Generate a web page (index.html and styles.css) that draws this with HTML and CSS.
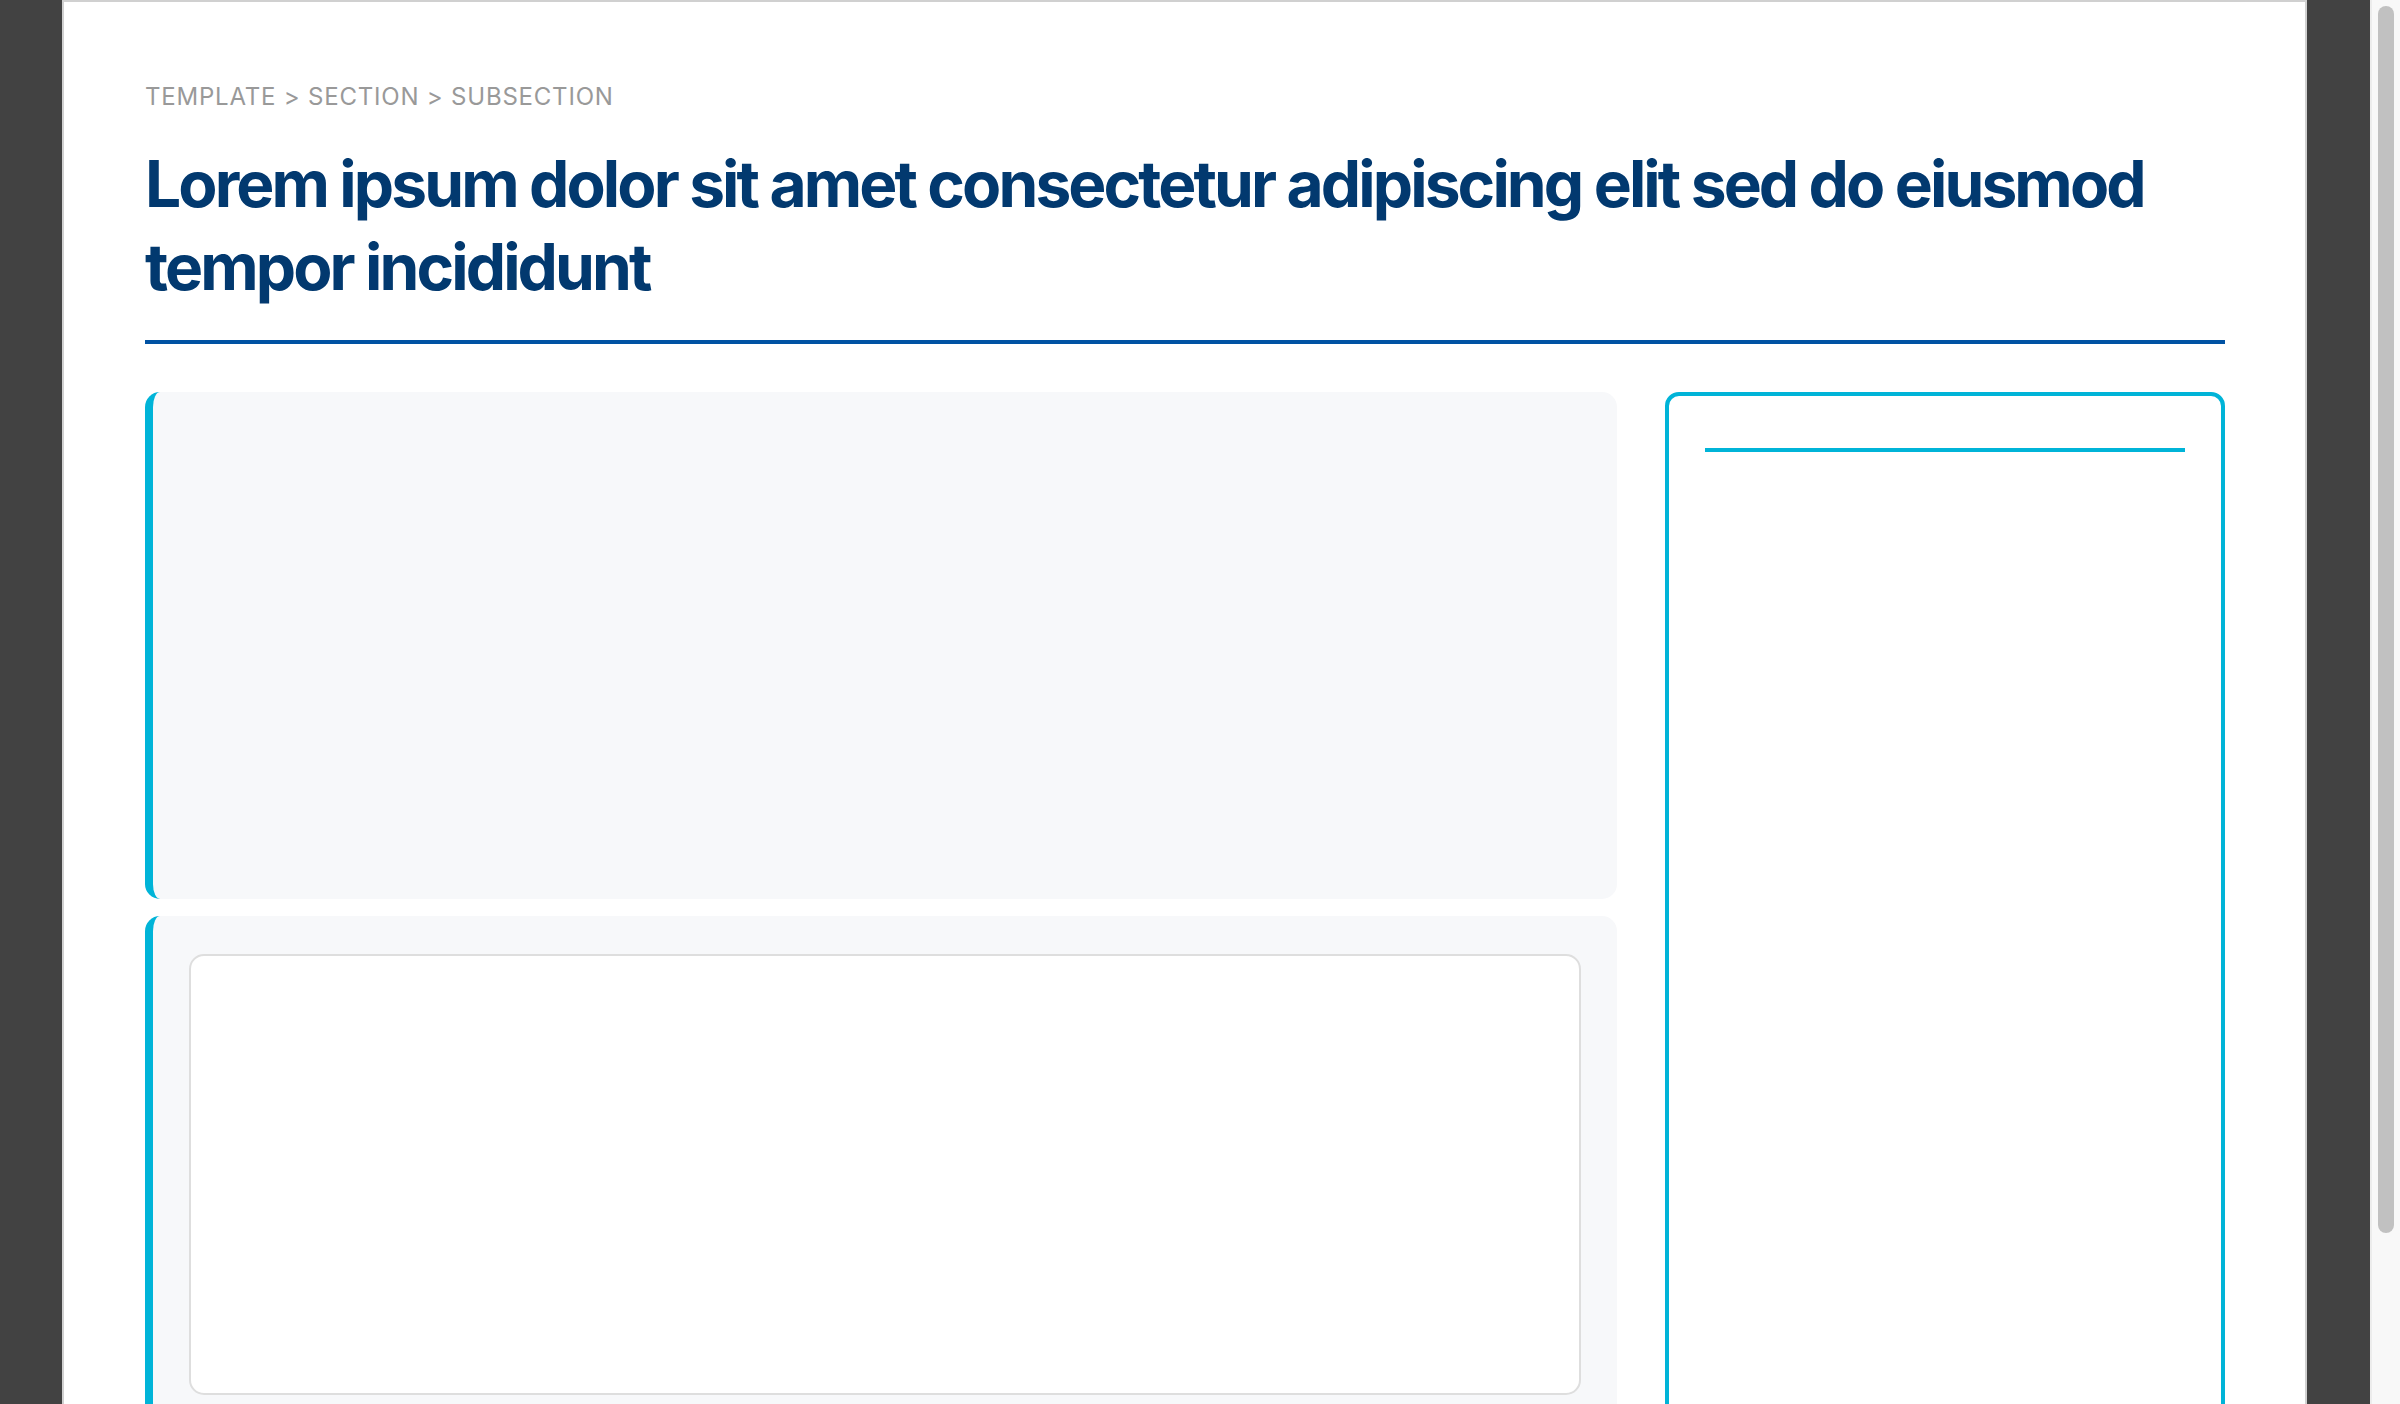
FILE: index.html
```html
<!DOCTYPE html>
<html lang="en">
<head>
<meta charset="utf-8">
<title>Template</title>
<link rel="stylesheet" href="styles.css">
</head>
<body>
<div class="gutter-left"></div>
<main class="page">
  <header class="page-header">
    <nav class="breadcrumb">TEMPLATE &gt; SECTION &gt; SUBSECTION</nav>
    <h1 class="title">Lorem ipsum dolor sit amet consectetur adipiscing elit sed do eiusmod tempor incididunt</h1>
  </header>
  <div class="layout">
    <div class="main-col">
      <section class="card card-top"></section>
      <section class="card card-bottom">
        <div class="inner-box"></div>
      </section>
    </div>
    <aside class="side-card">
      <div class="side-heading"></div>
    </aside>
  </div>
</main>
<div class="gutter-right"></div>
<div class="scrollbar"><div class="scroll-thumb"></div></div>
</body>
</html>
```

FILE: styles.css
```css
html, body {
  margin: 0;
  padding: 0;
  height: 100%;
  overflow: hidden;
}
body {
  display: flex;
  background: #424242;
  font-family: Inter, "Noto Sans", sans-serif;
}
.gutter-left {
  width: 62px;
  flex: none;
}
.page {
  flex: none;
  width: 2245px;
  box-sizing: border-box;
  background: #ffffff;
  border: 2px solid #d0d0d0;
  border-bottom: none;
  padding: 77px 80px 0 81px;
}
.gutter-right {
  width: 63px;
  flex: none;
}
.scrollbar {
  width: 30px;
  flex: none;
  background: #f8f8f8;
  border-left: 2px solid #ececec;
  box-sizing: border-box;
  padding: 6px 6px 0 6px;
}
.scroll-thumb {
  width: 16px;
  height: 1227px;
  background: #c1c1c1;
  border-radius: 8px;
}
.page-header {
  border-bottom: 4px solid #0052a3;
  padding-bottom: 32px;
}
.breadcrumb {
  font-size: 24px;
  line-height: 36px;
  color: #999999;
  letter-spacing: 0.033em;
}
.title {
  margin: 27px 0 0 0;
  font-size: 64px;
  line-height: 1.3;
  font-weight: 700;
  color: #02396f;
  letter-spacing: -0.045em;
}
.layout {
  display: grid;
  grid-template-columns: 1fr 560px;
  gap: 48px;
  margin-top: 48px;
  align-items: start;
}
.main-col {
  display: flex;
  flex-direction: column;
  gap: 17px;
}
.card {
  background: #f7f8fa;
  border-left: 8px solid #00b4d8;
  border-radius: 15px;
}
.card-top {
  height: 507px;
}
.card-bottom {
  padding: 38px 36px 36px 36px;
}
.inner-box {
  height: 437px;
  background: #ffffff;
  border: 2px solid #dedede;
  border-radius: 15px;
}
.side-card {
  height: 1200px;
  border: 4px solid #00b4d8;
  border-radius: 14px;
  padding: 36px;
  box-sizing: border-box;
  background: #ffffff;
}
.side-heading {
  height: 16px;
  border-bottom: 4px solid #00b4d8;
}
```
